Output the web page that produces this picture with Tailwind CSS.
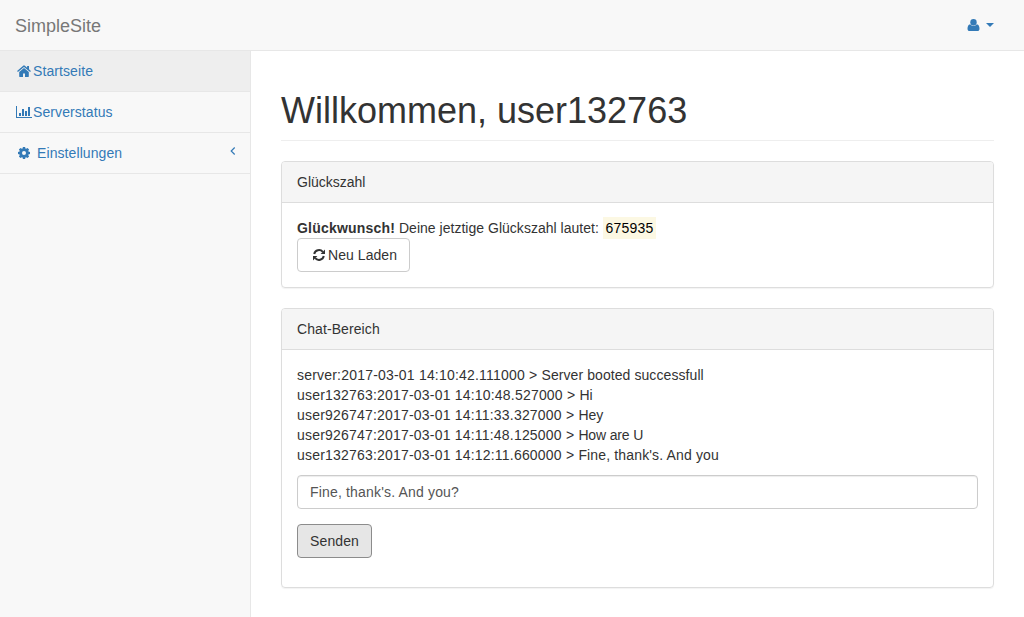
<!DOCTYPE html>
<html lang="de">
<head>
<meta charset="utf-8">
<title>SimpleSite</title>
<script src="https://cdn.jsdelivr.net/npm/@tailwindcss/browser@4"></script>
</head>
<body class="bg-[#f8f8f8] h-[617px] overflow-hidden flex flex-col text-[14px] leading-5 text-[#333] font-['Liberation_Sans',Arial,sans-serif]">
<header class="h-[51px] shrink-0 border-b border-[#e7e7e7] flex items-center justify-between pl-[15px] pr-[30px]">
  <a class="text-[18px] text-[#777] pt-[2px]">SimpleSite</a>
  <a class="flex items-center gap-[6px] text-[#337ab7]">
    <svg class="w-[13px] h-[12px]" viewBox="0 0 13 12" fill="currentColor"><circle cx="6.500" cy="3.200" r="3.200"/><path d="M3.200 5.200C1.200 5.600.5 7.600.5 9.700.5 11.200 1.300 12 2.700 12h7.600c1.400 0 2.200-.8 2.200-2.300 0-2.100-.7-4.100-2.700-4.500C8 7.400 5 7.400 3.200 5.200z"/></svg>
    <svg class="w-[8px] h-[4px]" viewBox="0 0 8 4" fill="currentColor"><path d="M0 0h8L4 4z"/></svg>
  </a>
</header>
<div class="flex flex-1 min-h-0">
  <nav class="w-[250px] shrink-0 text-[#337ab7] tracking-[0.09px]">
    <a class="flex items-center h-[41px] border-b border-[#e7e7e7] bg-[#eee] pl-[17px] gap-[2px]">
      <svg class="w-[14px] h-[12px]" viewBox="0 0 14 12" fill="currentColor"><path d="M7 3 2.200 7v4.500c0 .3.200.5.500.5H6V8.500h2V12h3.300c.3 0 .5-.2.500-.5V7z"/><path d="M7.800.7a1.200 1.200 0 0 0-1.600 0L.1 5.900l.8 1L7 1.900l6.100 5 .8-1L12 4.300V1h-1.900v1.700z"/></svg>
      <span>Startseite</span>
    </a>
    <a class="flex items-center h-[41px] border-b border-[#e7e7e7] pl-[16px] gap-[1px]">
      <svg class="w-[16px] h-[12px]" viewBox="0 0 16 12" fill="currentColor"><path d="M0 0h1v11h15v1H0zM3 7h2v3H3zM6 3h2v7H6zM9 5h2v5H9zM12 1h2v9h-2z"/></svg>
      <span>Serverstatus</span>
    </a>
    <a class="flex items-center h-[41px] border-b border-[#e7e7e7] pl-[18px] pr-[14px]">
      <svg class="w-[12px] h-[12px] mr-[7px]" viewBox="0 0 12 12" fill="currentColor" fill-rule="evenodd"><path d="M4.900 0h2.200l.3 1.500.7.300L9.500.9 11.100 2.500l-.9 1.400.3.700 1.500.3v2.200l-1.500.3-.3.700.9 1.400-1.600 1.600-1.400-.9-.7.300L7.100 12H4.900l-.3-1.500-.7-.3-1.400.9L.9 9.500l.9-1.400-.3-.7L0 7.100V4.900l1.500-.3.3-.7L.9 2.500 2.500.9l1.400.9.7-.3zM6 4a2 2 0 1 0 0 4 2 2 0 0 0 0-4z"/></svg>
      <span class="flex-1">Einstellungen</span>
      <svg class="w-[6px] h-[8px] mb-[5px]" viewBox="0 0 6 8" fill="none" stroke="currentColor" stroke-width="1.200"><path d="M4.700.5 1.200 4l3.500 3.500"/></svg>
    </a>
  </nav>
  <main class="flex-1 bg-white border-l border-[#e7e7e7] px-[30px]">
    <h1 class="mt-[40px] mb-[20px] pb-[9px] border-b border-[#eee] text-[36px] leading-[40px]">Willkommen, user132763</h1>
    <section class="h-[127px] mb-[20px] border border-[#ddd] rounded-[4px] shadow-[0_1px_1px_rgba(0,0,0,0.05)]">
      <h2 class="h-[41px] px-[15px] py-[10px] bg-[#f5f5f5] border-b border-[#ddd] rounded-t-[3px]">Glückszahl</h2>
      <div class="p-[15px]">
        <p><b class="tracking-[0.2px]">Glückwunsch!</b> <span class="tracking-[0.02px]">Deine jetztige Glückszahl lautet:</span> <mark class="bg-[#fcf8e3] text-black p-[0.2em] tracking-[0.22px]">675935</mark></p>
        <button class="flex items-center h-[34px] w-[113px] border border-[#ccc] rounded-[4px] bg-white pl-[15px] gap-[3px] tracking-[0.06px]">
          <svg class="w-[12px] h-[12px]" viewBox="0 0 12 12" fill="none" stroke="currentColor" stroke-width="2"><path d="M1.200 5A5 5 0 0 1 9.800 2.800M10.800 7A5 5 0 0 1 2.200 9.200"/><path d="M12 .6V5H7.600zM0 11.400V7h4.400z" fill="currentColor" stroke="none"/></svg>
          Neu Laden
        </button>
      </div>
    </section>
    <section class="h-[280px] border border-[#ddd] rounded-[4px] shadow-[0_1px_1px_rgba(0,0,0,0.05)]">
      <h2 class="h-[41px] px-[15px] py-[10px] bg-[#f5f5f5] border-b border-[#ddd] rounded-t-[3px] tracking-[0.09px]">Chat-Bereich</h2>
      <div class="p-[15px]">
        <p><span class="tracking-[0.2px]">server:2017-03-01 14:10:42.111000 &gt; </span><span class="tracking-[0.08px]">Server booted successfull</span></p>
        <p><span class="tracking-[0.2px]">user132763:2017-03-01 14:10:48.527000 &gt; </span><span>Hi</span></p>
        <p><span class="tracking-[0.2px]">user926747:2017-03-01 14:11:33.327000 &gt; </span><span>Hey</span></p>
        <p><span class="tracking-[0.2px]">user926747:2017-03-01 14:11:48.125000 &gt; </span><span class="tracking-[-0.15px]">How are U</span></p>
        <p><span class="tracking-[0.2px]">user132763:2017-03-01 14:12:11.660000 &gt; </span><span class="tracking-[0.15px]">Fine, thank's. And you</span></p>
        <input class="block mt-[10px] mb-[15px] w-full h-[34px] px-[12px] border border-[#ccc] rounded-[4px] text-[#555] tracking-[0.17px] shadow-[inset_0_1px_1px_rgba(0,0,0,0.075)]" value="Fine, thank's. And you?">
        <button class="block h-[34px] w-[75px] border border-[#8c8c8c] rounded-[4px] bg-[#e6e6e6] tracking-[0.1px]">Senden</button>
      </div>
    </section>
  </main>
</div>
</body>
</html>
